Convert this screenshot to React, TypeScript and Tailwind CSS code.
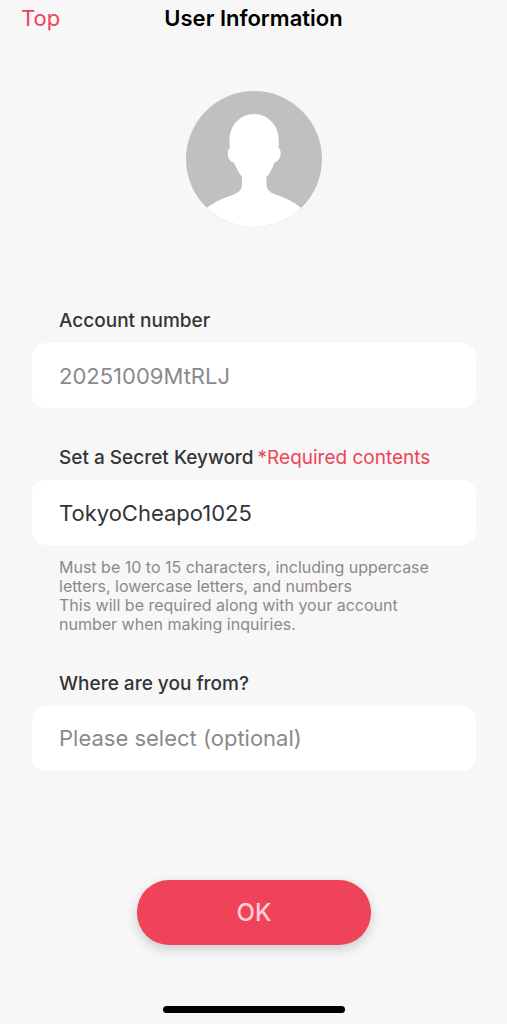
import React, { useState } from 'react';

const COUNTRIES = ['Japan', 'United States', 'United Kingdom', 'Australia', 'Canada', 'Other'];

const labelClass = 'mb-[10px] px-[27px] text-[19px] leading-6 font-medium text-[#343436]';
const fieldClass = 'block h-[65px] w-full appearance-none rounded-[14px] bg-white px-[27px] text-[22px] outline-none';

const Avatar: React.FC = () => (
    <svg viewBox="0 0 136 136" className="size-[136px]" role="img" aria-label="Profile picture">
        <defs>
            <clipPath id="avatar-circle">
                <circle cx="68" cy="68" r="68" />
            </clipPath>
        </defs>
        <g clipPath="url(#avatar-circle)">
            <rect width="136" height="136" fill="#c0c0c2" />
            <path
                fill="#fff"
                d="M68 23C54 23 43.5 34.5 43.5 49C43.5 52 43.6 54.5 44 57C42.5 57.8 41.8 59.5 41.8 62C41.8 67 44 71 48 71.4C50.5 77.5 53 82 56 86V93C56 103 46 103.5 36 108C29 111 24 114.5 20.5 117L10 136H126L115.5 117C112 114.5 107 110.5 100 107.5C90 103 80.5 102.5 80.5 93V86C84 82 86.5 77 88.5 71.4C92.5 70.5 94.7 66.5 94.7 62C94.7 59.5 94 57.8 92.5 57C92.8 54.5 92.8 52 92.8 49C92.8 34.5 82 23 68 23Z"
            />
        </g>
    </svg>
);

export default function App() {
    const [keyword, setKeyword] = useState('TokyoCheapo1025');
    const [country, setCountry] = useState('');

    return (
        <div className="flex min-h-screen flex-col bg-[#f7f7f7] font-['Inter','Liberation_Sans',sans-serif]">
            <header className="grid h-9 grid-cols-[1fr_auto_1fr] items-center px-[21px]">
                <a href="#top" className="justify-self-start text-[22px] leading-7 text-[#ee4358]">
                    Top
                </a>
                <h1 className="text-[22px] leading-7 font-semibold text-black">User Information</h1>
            </header>

            <main className="flex flex-1 flex-col pt-[55px] pr-[31px] pl-8">
                <div className="flex justify-center">
                    <Avatar />
                </div>

                <form className="flex flex-col pt-[82px]" onSubmit={(e) => e.preventDefault()}>
                    <div>
                        <label htmlFor="account" className={`block ${labelClass}`}>
                            Account number
                        </label>
                        <input
                            id="account"
                            type="text"
                            readOnly
                            value="20251009MtRLJ"
                            className={`${fieldClass} text-[#8a8a8d]`}
                        />
                    </div>

                    <div className="mt-[38px]">
                        <label htmlFor="keyword" className={`flex gap-1 whitespace-nowrap ${labelClass}`}>
                            Set a Secret Keyword
                            <span className="font-normal text-[#ee4358]">*Required contents</span>
                        </label>
                        <input
                            id="keyword"
                            type="text"
                            value={keyword}
                            onChange={(e) => setKeyword(e.target.value)}
                            aria-describedby="keyword-hint"
                            className={`${fieldClass} text-[#343436]`}
                        />
                        <p id="keyword-hint" className="mt-[13px] px-[27px] text-[16px] leading-[19px] text-[#8a8a8d]">
                            Must be 10 to 15 characters, including uppercase letters, lowercase letters, and numbers
                            <br />
                            This will be required along with your account number when making inquiries.
                        </p>
                    </div>

                    <div className="mt-[38px]">
                        <label htmlFor="country" className={`block ${labelClass}`}>
                            Where are you from?
                        </label>
                        <select
                            id="country"
                            value={country}
                            onChange={(e) => setCountry(e.target.value)}
                            className={`${fieldClass} text-[#8a8a8d]`}
                        >
                            <option value="">Please select (optional)</option>
                            {COUNTRIES.map((name) => (
                                <option key={name} value={name}>
                                    {name}
                                </option>
                            ))}
                        </select>
                    </div>

                    <button
                        type="submit"
                        className="mt-[109px] h-[65px] w-[234px] self-center rounded-[32px] bg-[#ee4358] text-[24px] font-medium text-[#ffd0d8] shadow-[0_4px_12px_rgba(0,0,0,0.18)]"
                    >
                        OK
                    </button>
                </form>
            </main>

            <div className="flex justify-center pt-10 pb-[11px]">
                <div className="h-[7px] w-[182px] rounded-full bg-black" />
            </div>
        </div>
    );
}
